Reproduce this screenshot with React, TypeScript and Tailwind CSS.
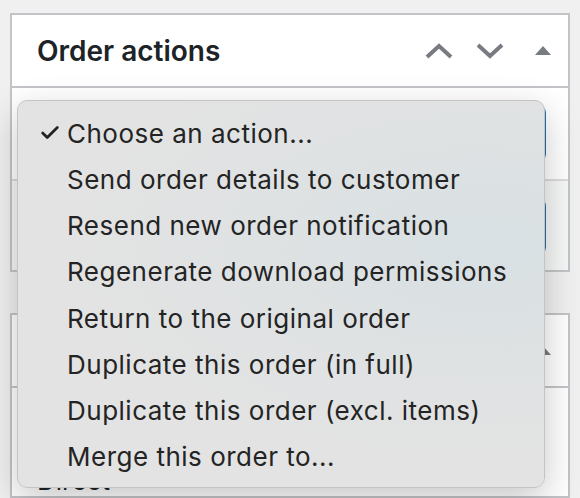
import { Check } from 'lucide-react';

const actions = [
  'Choose an action...',
  'Send order details to customer',
  'Resend new order notification',
  'Regenerate download permissions',
  'Return to the original order',
  'Duplicate this order (in full)',
  'Duplicate this order (excl. items)',
  'Merge this order to...',
];

function Chevron({ up }: { up?: boolean }) {
  return (
    <svg width="28" height="16" viewBox="0 0 28 16" className="shrink-0">
      <polyline
        points={up ? '2,14 14,3 26,14' : '2,2 14,13 26,2'}
        fill="none"
        stroke="#787c82"
        strokeWidth="4"
      />
    </svg>
  );
}

function Caret() {
  return (
    <svg width="16" height="9" viewBox="0 0 16 9" className="shrink-0">
      <polygon points="8,0 16,9 0,9" fill="#787c82" />
    </svg>
  );
}

export default function App() {
  return (
    <div className="relative h-[498px] w-[580px] overflow-hidden bg-[#f0f0f1] pl-[10px] pt-[13px] font-['Inter',sans-serif]">
      {/* order actions box */}
      <section className="w-[560px] border-2 border-[#c3c4c7] bg-white">
        <header className="flex h-[73px] items-center justify-between border-b-2 border-[#c3c4c7] pl-[25px] pr-[17px]">
          <h2 className="text-[28px] font-semibold leading-none text-[#1d2327]">Order actions</h2>
          <div className="flex items-center">
            <Chevron up />
            <div className="ml-[23px]">
              <Chevron />
            </div>
            <div className="ml-[31px]">
              <Caret />
            </div>
          </div>
        </header>
        <div className="flex h-[93px] items-start border-b-2 border-[#dcdcde] pl-[24px] pr-[22px] pt-[17px]">
          <div className="h-[57px] flex-1 rounded-lg border-2 border-[#2271b1] bg-white" />
        </div>
        <div className="flex h-[89px] items-start justify-end bg-[#f6f7f7] pr-[22px] pt-[17px]">
          <div className="h-[57px] w-[120px] rounded-lg bg-[#2271b1]" />
        </div>
      </section>

      {/* second box, mostly hidden behind the menu */}
      <section className="mt-[41px] w-[560px] border-2 border-[#c3c4c7] bg-white">
        <header className="flex h-[73px] items-center justify-end border-b-2 border-[#c3c4c7] pr-[17px]">
          <Caret />
        </header>
        <div className="px-[25px] pt-[78px] text-[26px] leading-[30px] text-[#1d2327]">Direct</div>
      </section>

      {/* native select menu */}
      <div className="absolute left-[17px] top-[100px] h-[388px] w-[528px] rounded-[10px] border border-[#c4c4c4] bg-[radial-gradient(ellipse_at_88%_38%,#d8e0e3_0%,#dfe2e3_35%,#e3e3e3_65%)] py-[9px] shadow-[0_12px_36px_rgba(0,0,0,0.22)]">
        {actions.map((a, i) => (
          <div key={a} className="relative flex h-[46.25px] items-center whitespace-nowrap pl-[49px] text-[26px] tracking-[0.5px] text-[#242424]">
            {i === 0 && <Check className="absolute left-[21px] h-[22px] w-[22px] text-[#242424]" strokeWidth={3} />}
            {a}
          </div>
        ))}
      </div>
    </div>
  );
}
